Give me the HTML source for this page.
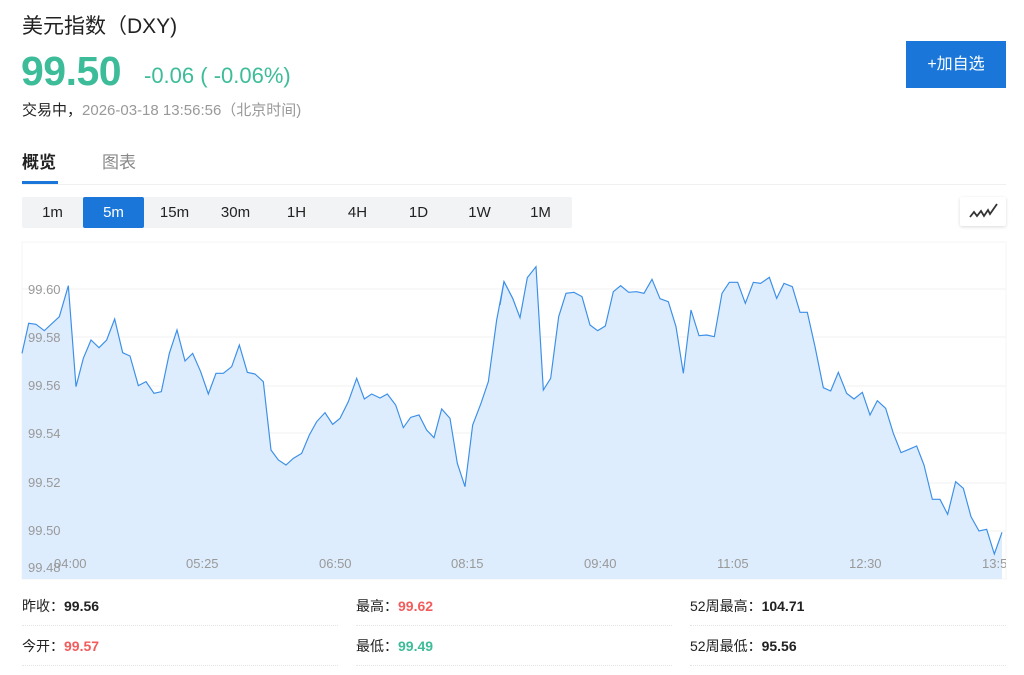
<!DOCTYPE html>
<html><head><meta charset="utf-8"><style>
*{margin:0;padding:0;box-sizing:border-box}
body{width:1024px;height:675px;background:#fff;font-family:"Liberation Sans","Noto Sans CJK SC",sans-serif;position:relative;overflow:hidden;color:#333}
.a{position:absolute;white-space:nowrap}
.tf{position:absolute;left:22px;top:197px;width:550px;height:31px;background:#f2f3f5;border-radius:2px}
.tf span{position:absolute;top:0;width:61px;height:31px;line-height:31px;text-align:center;font-size:15px;color:#222}
.tf .on{background:#1a77d9;color:#fff;border-radius:2px}
.st{position:absolute;font-size:14px;color:#222;height:40px;line-height:40px;width:316px;border-bottom:1px dotted #e5e5e5}
.st b{font-weight:bold}
.yl{position:absolute;left:28px;font-size:13px;color:#999}
.xl{position:absolute;top:556px;font-size:13px;color:#999}
</style></head><body>
<div class="a" style="left:22px;top:10px;font-size:21px;color:#222">美元指数（DXY)</div>
<div class="a" style="left:21px;top:48px;font-size:41px;font-weight:bold;color:#3cbc98;letter-spacing:-0.5px">99.50</div>
<div class="a" style="left:144px;top:63px;font-size:22px;color:#3cbc98">-0.06 ( -0.06%)</div>
<div class="a" style="left:22px;top:99px;font-size:15px;color:#222">交易中，<span style="color:#999">2026-03-18 13:56:56（北京时间)</span></div>
<div class="a" style="left:906px;top:41px;width:100px;height:47px;background:#1a77d9;color:#fff;font-size:16px;line-height:47px;text-align:center">+加自选</div>
<div class="a" style="left:22px;top:148px;font-size:17px;font-weight:bold;color:#222">概览</div>
<div class="a" style="left:102px;top:148px;font-size:17px;color:#888">图表</div>
<div class="a" style="left:22px;top:184px;width:984px;height:1px;background:#f0f0f0"></div>
<div class="a" style="left:22px;top:181px;width:36px;height:3px;background:#1a77d9"></div>
<div class="tf"><span style="left:0">1m</span><span class="on" style="left:61px">5m</span><span style="left:122px">15m</span><span style="left:183px">30m</span><span style="left:244px">1H</span><span style="left:305px">4H</span><span style="left:366px">1D</span><span style="left:427px">1W</span><span style="left:488px">1M</span></div>
<div class="a" style="left:960px;top:197px;width:46px;height:29px;background:#fff;box-shadow:0 1px 3px rgba(0,0,0,.15);border-radius:2px">
<svg width="46" height="29"><path d="M10 20 L14 15 L17 19 L21 14 L24 19 L28 13 L30 17 L37 7" fill="none" stroke="#333" stroke-width="1.8"/></svg></div>
<svg class="a" style="left:0;top:240px" width="1024" height="350">
<rect x="22" y="2" width="984" height="337" fill="#fff" stroke="#f4f4f4"/>
<g stroke="#f2f2f2" stroke-width="1"><line x1="22" x2="1006" y1="49" y2="49"/><line x1="22" x2="1006" y1="97" y2="97"/><line x1="22" x2="1006" y1="146" y2="146"/><line x1="22" x2="1006" y1="193" y2="193"/><line x1="22" x2="1006" y1="243" y2="243"/><line x1="22" x2="1006" y1="291" y2="291"/></g>
<g transform="scale(0.33333)">
<polygon fill="#deedfd" points="66,1017 66,340 86,250 108,253 133,272 178,230 205,137 228,440 250,355 273,300 297,323 320,300 344,237 368,338 390,348 415,437 438,425 462,460 484,455 508,340 531,270 555,363 578,340 602,395 625,462 648,400 670,400 695,380 718,315 742,397 765,402 790,425 813,630 835,660 858,675 880,655 905,640 928,585 950,545 975,518 998,553 1020,535 1045,485 1070,415 1093,477 1115,462 1140,474 1162,462 1187,495 1210,563 1232,532 1257,525 1280,570 1302,593 1325,507 1350,535 1372,670 1395,740 1418,555 1443,490 1465,425 1490,240 1512,125 1538,175 1560,235 1560,1017"/>
<polyline fill="none" stroke="#3b8fe8" stroke-width="3.5" points="66,340 86,250 108,253 133,272 178,230 205,137 228,440 250,355 273,300 297,323 320,300 344,237 368,338 390,348 415,437 438,425 462,460 484,455 508,340 531,270 555,363 578,340 602,395 625,462 648,400 670,400 695,380 718,315 742,397 765,402 790,425 813,630 835,660 858,675 880,655 905,640 928,585 950,545 975,518 998,553 1020,535 1045,485 1070,415 1093,477 1115,462 1140,474 1162,462 1187,495 1210,563 1232,532 1257,525 1280,570 1302,593 1325,507 1350,535 1372,670 1395,740 1418,555 1443,490 1465,425 1490,240 1512,125 1538,175 1560,235"/>
</g>
<g transform="translate(500,0) scale(0.33333)">
<polygon fill="#deedfd" points="0,1017 0,195 12,125 38,175 60,233 82,113 108,80 130,450 152,415 176,230 198,160 222,157 246,170 270,255 293,272 316,258 340,155 362,137 386,157 410,155 432,160 456,118 480,176 505,185 528,260 550,400 573,210 597,287 620,285 643,290 666,160 688,127 713,127 736,190 760,127 782,130 808,112 830,175 852,130 877,140 900,217 922,217 945,320 970,443 992,453 1015,397 1040,460 1062,477 1087,457 1110,525 1132,482 1157,505 1180,580 1203,638 1227,628 1250,618 1272,675 1297,778 1320,778 1343,823 1367,725 1390,745 1413,830 1437,873 1460,868 1483,942 1506,877 1506,1017"/>
<polyline fill="none" stroke="#3b8fe8" stroke-width="3.5" points="0,195 12,125 38,175 60,233 82,113 108,80 130,450 152,415 176,230 198,160 222,157 246,170 270,255 293,272 316,258 340,155 362,137 386,157 410,155 432,160 456,118 480,176 505,185 528,260 550,400 573,210 597,287 620,285 643,290 666,160 688,127 713,127 736,190 760,127 782,130 808,112 830,175 852,130 877,140 900,217 922,217 945,320 970,443 992,453 1015,397 1040,460 1062,477 1087,457 1110,525 1132,482 1157,505 1180,580 1203,638 1227,628 1250,618 1272,675 1297,778 1320,778 1343,823 1367,725 1390,745 1413,830 1437,873 1460,868 1483,942 1506,877"/>
</g>
</svg>
<div class="yl" style="top:282px">99.60</div><div class="yl" style="top:330px">99.58</div><div class="yl" style="top:378px">99.56</div><div class="yl" style="top:426px">99.54</div><div class="yl" style="top:475px">99.52</div><div class="yl" style="top:523px">99.50</div><div class="yl" style="top:560px">99.48</div>
<div class="xl" style="left:54px">04:00</div><div class="xl" style="left:186px">05:25</div><div class="xl" style="left:319px">06:50</div><div class="xl" style="left:451px">08:15</div><div class="xl" style="left:584px">09:40</div><div class="xl" style="left:717px">11:05</div><div class="xl" style="left:849px">12:30</div><div class="xl" style="left:982px;width:24px;overflow:hidden">13:55</div>
<div class="st" style="left:22px;top:586px">昨收：<b>99.56</b></div>
<div class="st" style="left:356px;top:586px">最高：<b style="color:#f25c5c">99.62</b></div>
<div class="st" style="left:690px;top:586px">52周最高：<b>104.71</b></div>
<div class="st" style="left:22px;top:626px">今开：<b style="color:#f25c5c">99.57</b></div>
<div class="st" style="left:356px;top:626px">最低：<b style="color:#3cbc98">99.49</b></div>
<div class="st" style="left:690px;top:626px">52周最低：<b>95.56</b></div>
</body></html>
